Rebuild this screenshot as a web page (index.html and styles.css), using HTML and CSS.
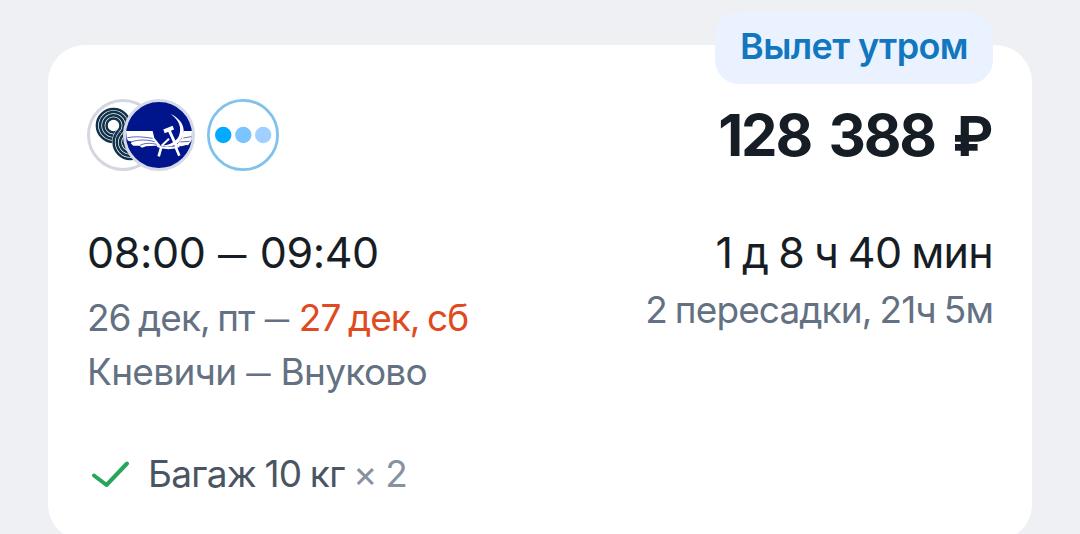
FILE: index.html
```html
<!DOCTYPE html>
<html lang="ru">
<head>
  <meta charset="UTF-8" />
  <meta name="viewport" content="width=device-width, initial-scale=1" />
  <title>Билет Кневичи — Внуково</title>
  <link rel="stylesheet" href="styles.css">
</head>
<body>
  <div class="ticket">
    <div class="badge">Вылет утром</div>

    <div class="ticket-header">
      <div class="airlines">
        <svg class="logo" viewBox="0 0 72 72">
          <defs>
            <clipPath id="lowerLoop"><path d="M22 22 L62 62 V72 H0 V36 Z" /></clipPath>
          </defs>
          <circle cx="36" cy="36" r="34.5" fill="#fff" stroke="#d4d7df" stroke-width="3" />
          <g fill="none" stroke="#12324c" stroke-width="2.5">
            <circle cx="26.5" cy="26.5" r="7" />
            <circle cx="26.5" cy="26.5" r="10.2" />
            <circle cx="26.5" cy="26.5" r="13.4" />
            <circle cx="26.5" cy="26.5" r="16.6" />
          </g>
          <g clip-path="url(#lowerLoop)" fill="none" stroke="#12324c" stroke-width="2.5">
            <circle cx="43.3" cy="43.3" r="18.4" fill="#fff" stroke="none" />
            <circle cx="43.3" cy="43.3" r="7.1" />
            <circle cx="43.3" cy="43.3" r="10.3" />
            <circle cx="43.3" cy="43.3" r="13.5" />
            <circle cx="43.3" cy="43.3" r="16.7" />
          </g>
        </svg>
        <svg class="logo logo-over" viewBox="9 9 216 216">
          <circle cx="117" cy="117" r="103.5" fill="#00148c" stroke="#d5d9e8" stroke-width="9" />
          <!-- крылья -->
          <g fill="#fff">
            <path d="M18 105 H98 L103 126 L122 149 L104 149 L78 151 L66 155 L58 149 L40 149 L32 142 L37 137 L24 134 L20 126 Z" />
            <path d="M216 105 H191 L185 128 L169 148 L184 151 L198 147 L204 148 L211 139 L215 132 Z" />
          </g>
          <g fill="none" stroke="#3c4ba6" stroke-width="2.5">
            <path d="M22 125 C50 120 70 123 98 127 M36 137 C58 130 82 131 104 137 M60 148 C76 140 92 141 110 145" />
            <path d="M214 122 L190 126 M209 136 L181 138" />
          </g>
          <!-- серп и молот -->
          <path d="M152 54 C189 70 202 107 182 131 C169 150 143 157 122 148 C147 149 168 138 177 119 C186 96 178 73 152 54 Z" fill="#fff" />
          <g fill="none" stroke="#fff">
            <path d="M132 106 L160 95" stroke-width="12" />
            <path d="M147 102 L169 150" stroke-width="9" />
            <path d="M147 128 L125 149" stroke-width="6" />
            <path d="M112 150 C130 158 160 158 178 150" stroke-width="7" />
            <path d="M124 153 L116 181 M167 153 L178 179" stroke-width="8" />
          </g>
        </svg>
        <svg class="logo logo-more" viewBox="0 0 72 72">
          <circle cx="36" cy="36" r="34.6" fill="#fff" stroke="#80c2eb" stroke-width="2.8" />
          <circle cx="16.2" cy="36" r="8.2" fill="#00aaff" />
          <circle cx="36.3" cy="36" r="8.2" fill="#7bc4ff" />
          <circle cx="56.2" cy="36" r="8.2" fill="#9fd0ff" />
        </svg>
      </div>
      <div class="price">128 388 <span class="currency">₽</span></div>
    </div>

    <div class="flight">
      <div class="route">
        <div class="time">08:00 <span class="dash">—</span> 09:40</div>
        <div class="dates">26 дек, пт <span class="dash">—</span> <span class="next-day">27 дек, сб</span></div>
        <div class="airports">Кневичи <span class="dash">—</span> Внуково</div>
      </div>
      <div class="duration">
        <div class="total">1 д 8 ч 40 мин</div>
        <div class="stops">2 пересадки, 21ч 5м</div>
      </div>
    </div>

    <div class="baggage">
      <svg class="check" viewBox="0 0 40 30">
        <path d="M3 16.5 L15.5 26 L36 4.5" />
      </svg>
      <span class="baggage-text">Багаж 10 кг <span class="count">× 2</span></span>
    </div>
  </div>
</body>
</html>
```
FILE: styles.css
```css
body {
  margin: 0;
  height: 534px;
  overflow: hidden;
  background-color: #eef0f4;
  color: #171d25;
  font-family: Inter, "Liberation Sans", sans-serif;
  white-space: nowrap;
}
/* Карточка билета */
.ticket {
  position: relative;
  box-sizing: border-box;
  width: 984px;
  height: 496px;
  margin: 45px auto 0;
  padding: 54px 39px 0;
  background-color: #fff;
  border-radius: 37px;
}
/* Плашка над карточкой */
.badge {
  position: absolute;
  top: -33px;
  right: 39px;
  width: 278px;
  height: 72px;
  border-radius: 24px;
  background-color: #e9f2fe;
  color: #1277be;
  font-size: 36px;
  font-weight: 600;
  letter-spacing: -0.6px;
  line-height: 68px;
  text-align: center;
}
.ticket-header {
  display: flex;
  justify-content: space-between;
  align-items: center;
  height: 72px;
}
.airlines {
  display: flex;
}
.logo {
  width: 72px;
  height: 72px;
}
.logo-over {
  margin-left: -36px;
}
.logo-more {
  margin-left: 12px;
}
.price {
  margin-right: 2px;
  font-size: 58px;
  font-weight: 700;
  letter-spacing: -2.2px;
  word-spacing: 6px;
  line-height: 72px;
}
.currency {
  font-size: 55px;
}
/* Время, даты и аэропорты */
.flight {
  display: flex;
  justify-content: space-between;
  margin-top: 53px;
}
.time,
.total {
  font-size: 43px;
  line-height: 56px;
}
.time {
  letter-spacing: -0.4px;
}
.total {
  letter-spacing: -0.7px;
  word-spacing: -1.6px;
}
.dates,
.airports,
.stops {
  color: #647182;
  font-size: 37px;
  line-height: 54px;
}
.dates {
  margin-top: 11px;
  letter-spacing: -1px;
  word-spacing: -1.8px;
}
.airports {
  letter-spacing: -0.7px;
  word-spacing: -1px;
}
.dash {
  margin: 0 2px 0 1px;
  font-size: 0.66em;
  font-weight: 600;
  line-height: 1;
  vertical-align: 0.12em;
}
.dates .dash {
  margin: 0 3px;
}
.next-day {
  color: #e04a20;
}
.duration {
  text-align: right;
}
.stops {
  margin-top: 3px;
  letter-spacing: -0.9px;
  word-spacing: -1.5px;
}
/* Багаж */
.baggage {
  display: flex;
  align-items: center;
  gap: 17px;
  margin-top: 48px;
  padding-left: 4px;
  color: #4a5563;
  font-size: 37px;
  letter-spacing: -0.7px;
  word-spacing: -1.3px;
  line-height: 54px;
}
.check {
  width: 40px;
  height: 30px;
  fill: none;
  stroke: #27a55a;
  stroke-width: 4;
  stroke-linecap: round;
  stroke-linejoin: round;
}
.count {
  color: #8792a0;
}
```
